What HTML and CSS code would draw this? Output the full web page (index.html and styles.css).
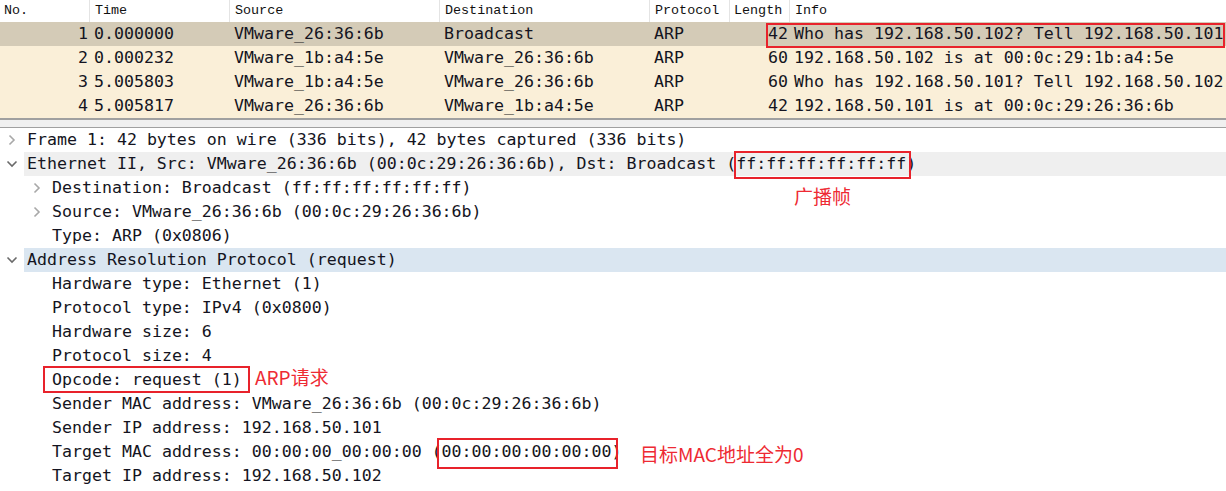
FILE: index.html
```html
<!DOCTYPE html>
<html>
<head>
<meta charset="utf-8">
<link rel="stylesheet" href="styles.css">
</head>
<body>
<div class="app">
  <div class="plist">
    <div class="prow phead">
      <div class="c c-no">No.</div>
      <div class="c c-time">Time</div>
      <div class="c c-src">Source</div>
      <div class="c c-dst">Destination</div>
      <div class="c c-proto">Protocol</div>
      <div class="c c-len">Length</div>
      <div class="c c-info">Info</div>
    </div>
    <div class="prow pdata sel">
      <div class="c c-no">1</div>
      <div class="c c-time">0.000000</div>
      <div class="c c-src">VMware_26:36:6b</div>
      <div class="c c-dst">Broadcast</div>
      <div class="c c-proto">ARP</div>
      <div class="c c-len">42</div>
      <div class="c c-info">Who has 192.168.50.102? Tell 192.168.50.101</div>
    </div>
    <div class="prow pdata">
      <div class="c c-no">2</div>
      <div class="c c-time">0.000232</div>
      <div class="c c-src">VMware_1b:a4:5e</div>
      <div class="c c-dst">VMware_26:36:6b</div>
      <div class="c c-proto">ARP</div>
      <div class="c c-len">60</div>
      <div class="c c-info">192.168.50.102 is at 00:0c:29:1b:a4:5e</div>
    </div>
    <div class="prow pdata">
      <div class="c c-no">3</div>
      <div class="c c-time">5.005803</div>
      <div class="c c-src">VMware_1b:a4:5e</div>
      <div class="c c-dst">VMware_26:36:6b</div>
      <div class="c c-proto">ARP</div>
      <div class="c c-len">60</div>
      <div class="c c-info">Who has 192.168.50.101? Tell 192.168.50.102</div>
    </div>
    <div class="prow pdata">
      <div class="c c-no">4</div>
      <div class="c c-time">5.005817</div>
      <div class="c c-src">VMware_26:36:6b</div>
      <div class="c c-dst">VMware_1b:a4:5e</div>
      <div class="c c-proto">ARP</div>
      <div class="c c-len">42</div>
      <div class="c c-info">192.168.50.101 is at 00:0c:29:26:36:6b</div>
    </div>
  </div>
  <div class="splitter"></div>
  <div class="tree">
    <div class="trow">
      <span class="tog"><svg width="8" height="12" viewBox="0 0 8 12"><polyline points="1.5,1.5 6,6 1.5,10.5" class="chev-c"/></svg></span>
      <span class="lbl">Frame 1: 42 bytes on wire (336 bits), 42 bytes captured (336 bits)</span>
    </div>
    <div class="trow">
      <span class="tog"><svg width="12" height="8" viewBox="0 0 12 8"><polyline points="1.5,1.5 6,6 10.5,1.5" class="chev-o"/></svg></span>
      <span class="lbl hl-gray">Ethernet II, Src: VMware_26:36:6b (00:0c:29:26:36:6b), Dst: Broadcast (ff:ff:ff:ff:ff:ff)</span>
    </div>
    <div class="trow l1">
      <span class="tog"><svg width="8" height="12" viewBox="0 0 8 12"><polyline points="1.5,1.5 6,6 1.5,10.5" class="chev-c"/></svg></span>
      <span class="lbl">Destination: Broadcast (ff:ff:ff:ff:ff:ff)</span>
    </div>
    <div class="trow l1">
      <span class="tog"><svg width="8" height="12" viewBox="0 0 8 12"><polyline points="1.5,1.5 6,6 1.5,10.5" class="chev-c"/></svg></span>
      <span class="lbl">Source: VMware_26:36:6b (00:0c:29:26:36:6b)</span>
    </div>
    <div class="trow l1">
      <span class="tog"></span>
      <span class="lbl">Type: ARP (0x0806)</span>
    </div>
    <div class="trow">
      <span class="tog"><svg width="12" height="8" viewBox="0 0 12 8"><polyline points="1.5,1.5 6,6 10.5,1.5" class="chev-o"/></svg></span>
      <span class="lbl hl-blue">Address Resolution Protocol (request)</span>
    </div>
    <div class="trow l1"><span class="tog"></span><span class="lbl">Hardware type: Ethernet (1)</span></div>
    <div class="trow l1"><span class="tog"></span><span class="lbl">Protocol type: IPv4 (0x0800)</span></div>
    <div class="trow l1"><span class="tog"></span><span class="lbl">Hardware size: 6</span></div>
    <div class="trow l1"><span class="tog"></span><span class="lbl">Protocol size: 4</span></div>
    <div class="trow l1"><span class="tog"></span><span class="lbl">Opcode: request (1)</span></div>
    <div class="trow l1"><span class="tog"></span><span class="lbl">Sender MAC address: VMware_26:36:6b (00:0c:29:26:36:6b)</span></div>
    <div class="trow l1"><span class="tog"></span><span class="lbl">Sender IP address: 192.168.50.101</span></div>
    <div class="trow l1"><span class="tog"></span><span class="lbl">Target MAC address: 00:00:00_00:00:00 (00:00:00:00:00:00)</span></div>
    <div class="trow l1"><span class="tog"></span><span class="lbl">Target IP address: 192.168.50.102</span></div>
  </div>

  <div class="box box-info"></div>
  <div class="box box-bcast"></div>
  <div class="box box-opcode"></div>
  <div class="box box-target"></div>
  <div class="note note-bcast">广播帧</div>
  <div class="note note-arp">ARP请求</div>
  <div class="note note-target">目标MAC地址全为0</div>
</div>
</body>
</html>
```

FILE: styles.css
```css
html, body {
  margin: 0;
  padding: 0;
  background: #ffffff;
}

.app {
  position: relative;
  width: 1226px;
  height: 491px;
  overflow: hidden;
  font-family: "DejaVu Sans Mono", "Liberation Mono", monospace;
  font-size: 16.6px;
  color: #141421;
}

/* ---------- packet list ---------- */
.plist {
  display: flex;
  flex-direction: column;
}

.prow {
  display: grid;
  grid-template-columns: 90px 140px 210px 210px 80px 60px 1fr;
  white-space: nowrap;
}

.phead {
  height: 22px;
  background: #ffffff;
  font-family: "Liberation Mono", monospace;
  font-size: 13.4px;
  color: #111111;
}

.phead .c {
  padding-left: 5px;
  line-height: 22px;
  border-right: 1px solid #e4e4e4;
}

.phead .c-no { padding-left: 4px; }
.phead .c-len { padding-left: 4px; }
.phead .c-info { border-right: none; }

.pdata {
  height: 24px;
  line-height: 24px;
  background: #faefd8;
}

.pdata.sel {
  background: #d4cbb7;
}

.pdata .c {
  padding-left: 4px;
  overflow: hidden;
}

.pdata .c-no {
  text-align: right;
  padding-left: 0;
  padding-right: 2px;
}

.pdata .c-len {
  text-align: right;
  padding-left: 0;
  padding-right: 2px;
}

.splitter {
  background: #f0f0f0;
  border-top: 2px solid #a0a0a0;
  border-bottom: 1px solid #a0a0a0;
  box-sizing: border-box;
  height: 10px;
}

/* ---------- tree ---------- */
.tree {
  display: flex;
  flex-direction: column;
}

.trow {
  display: flex;
  height: 24px;
  align-items: stretch;
  white-space: nowrap;
}

.trow.l1 {
  padding-left: 25px;
}

.tog {
  width: 24px;
  flex: none;
  display: flex;
  align-items: center;
  justify-content: center;
}

.lbl {
  flex: 1;
  padding-left: 3px;
  line-height: 24px;
}

.hl-gray { background: #efefef; }
.hl-blue { background: #dae6f1; }

.chev-c {
  fill: none;
  stroke: #a8a8a8;
  stroke-width: 1.6;
}

.chev-o {
  fill: none;
  stroke: #6a6a6a;
  stroke-width: 1.6;
}

/* ---------- annotations ---------- */
.box {
  position: absolute;
  border: 2px solid #e8222b;
  box-sizing: border-box;
}

.box-info   { left: 766px; top: 23px;  width: 459px; height: 25px; }
.box-bcast  { left: 734px; top: 151px; width: 177px; height: 28px; }
.box-opcode { left: 43px;  top: 366px; width: 207px; height: 27px; }
.box-target { left: 437px; top: 438px; width: 181px; height: 31px; }

.note {
  position: absolute;
  font-family: "Noto Sans CJK SC", sans-serif;
  font-size: 19px;
  color: #ee2a33;
  line-height: 24px;
  white-space: nowrap;
}

.note-bcast  { left: 794px; top: 184px; }
.note-arp    { left: 255px; top: 365px; }
.note-target { left: 640px; top: 442px; }
```
